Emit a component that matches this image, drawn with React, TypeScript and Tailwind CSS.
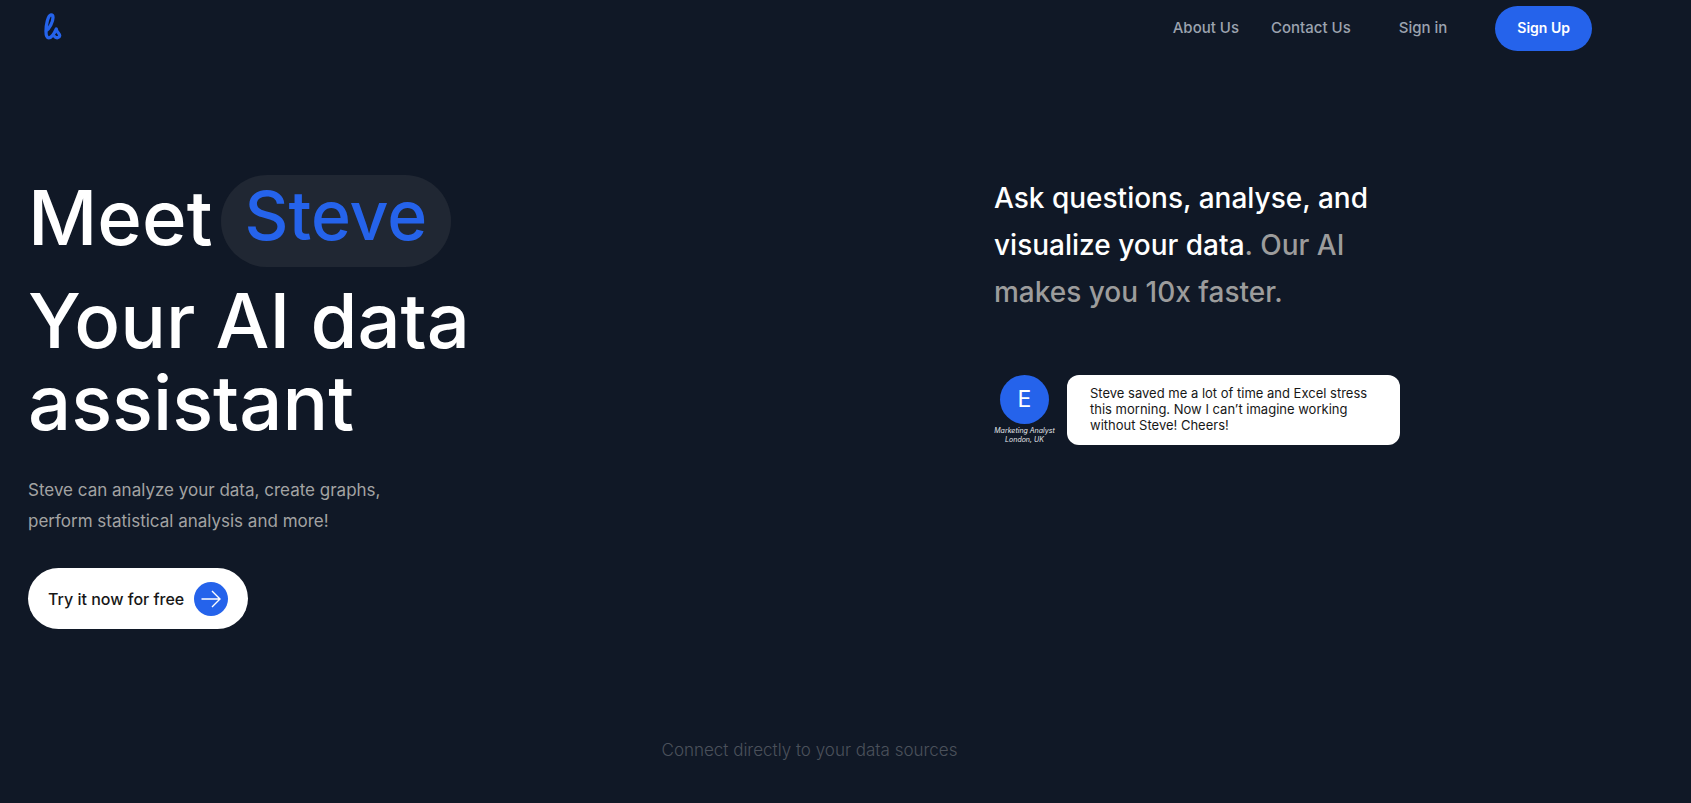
// Landing page - header, hero and data sources teaser

const navLinks = [
  { label: 'About Us', href: '#about' },
  { label: 'Contact Us', href: '#contact' },
]

function Logo() {
  return (
    <a href="#home" aria-label="Home" className="block">
      <svg
        width="18"
        height="28"
        viewBox="0 0 18 28"
        fill="none"
        stroke="#2563eb"
        strokeWidth="3.3"
        strokeLinecap="round"
        strokeLinejoin="round"
      >
        <path d="M2 18C5.500 15.500 9 9 9 4.500C9 2.400 8.200 1.700 7 1.900C4 2.500 2 11 2 18.500C2 22.500 2.800 24.800 4.800 24.800C7.400 24.800 10 21 12.300 16C12.300 19 15.900 20.500 15.700 22.800C15.400 25 12.400 25.300 11 23.800" />
      </svg>
    </a>
  )
}

function Header() {
  return (
    <header className="flex items-start justify-between pt-[6px] pr-[99px] pl-[44px]">
      <div className="pt-[7px]">
        <Logo />
      </div>
      <nav className="flex items-center text-[15px] font-medium text-[#9ca3af]">
        <div className="flex gap-8 pr-12">
          {navLinks.map((link) => (
            <a key={link.label} href={link.href} className="hover:text-white">
              {link.label}
            </a>
          ))}
        </div>
        <a href="#signin" className="pr-12 hover:text-white">
          Sign in
        </a>
        <button
          type="button"
          className="h-[45px] rounded-full bg-[#2563eb] px-[22px] pb-[2px] text-[14px] font-semibold text-white hover:bg-blue-700"
        >
          Sign Up
        </button>
      </nav>
    </header>
  )
}

function ArrowIcon() {
  return (
    <svg width="20" height="18" viewBox="0 0 20 18" fill="none" stroke="white" strokeWidth="1.4">
      <path d="M0.500 9H19M11 1L19 9L11 17" />
    </svg>
  )
}

function Testimonial() {
  return (
    <figure className="flex items-start gap-3">
      <figcaption className="flex w-[61px] flex-col items-center">
        <span className="flex size-[49px] items-center justify-center rounded-full bg-[#2563eb] text-[23px] text-white">
          E
        </span>
        <span className="pt-[2px] text-center text-[7px] leading-[9px] whitespace-nowrap text-gray-200 italic">
          Marketing Analyst
          <br />
          London, UK
        </span>
      </figcaption>
      <blockquote className="flex h-[70px] w-[333px] items-center rounded-xl bg-white px-[23px] pb-[2px] text-[13px] leading-4 whitespace-nowrap text-neutral-900">
        Steve saved me a lot of time and Excel stress
        <br />
        this morning. Now I can’t imagine working
        <br />
        without Steve! Cheers!
      </blockquote>
    </figure>
  )
}

export default function App() {
  return (
    <div className="min-h-screen bg-[#101826] font-['Inter',sans-serif]">
      <Header />

      <main>
        {/* Hero */}
        <section className="grid grid-cols-[966fr_669fr] px-7 pt-[124px]">
          <div>
            <h1 className="max-w-[480px] text-[76px] leading-[82px] font-medium text-white">
              <span className="flex items-center gap-2">
                <span className="pb-2">Meet</span>
                <span className="flex h-[92px] items-center rounded-full bg-[#202733] px-6 pb-3 text-[68px] text-[#2563eb]">
                  Steve
                </span>
              </span>
              <span className="block pt-3">Your AI data assistant</span>
            </h1>
            <p className="pt-8 text-[17px] leading-[31px] text-[#a3a3a3]">
              Steve can analyze your data, create graphs,
              <br />
              perform statistical analysis and more!
            </p>
            <button
              type="button"
              className="mt-[31px] flex h-[61px] items-center gap-[10px] rounded-full bg-white px-5 text-[16px] font-medium text-neutral-900"
            >
              Try it now for free
              <span className="flex size-[34px] items-center justify-center rounded-full bg-[#2563eb]">
                <ArrowIcon />
              </span>
            </button>
          </div>

          <div>
            <p className="text-[28px] leading-[47px] font-medium text-[#9c9c9c]">
              <span className="text-white">
                Ask questions, analyse, and
                <br />
                visualize your data
              </span>
              . Our AI
              <br />
              makes you 10x faster.
            </p>
            <div className="pt-[59px]">
              <Testimonial />
            </div>
          </div>
        </section>

        {/* Data sources */}
        <p className="pt-[105px] pr-[72px] text-center text-[17px] leading-8 font-light text-[#4b515b]">
          Connect directly to your data sources
        </p>
      </main>
    </div>
  )
}
